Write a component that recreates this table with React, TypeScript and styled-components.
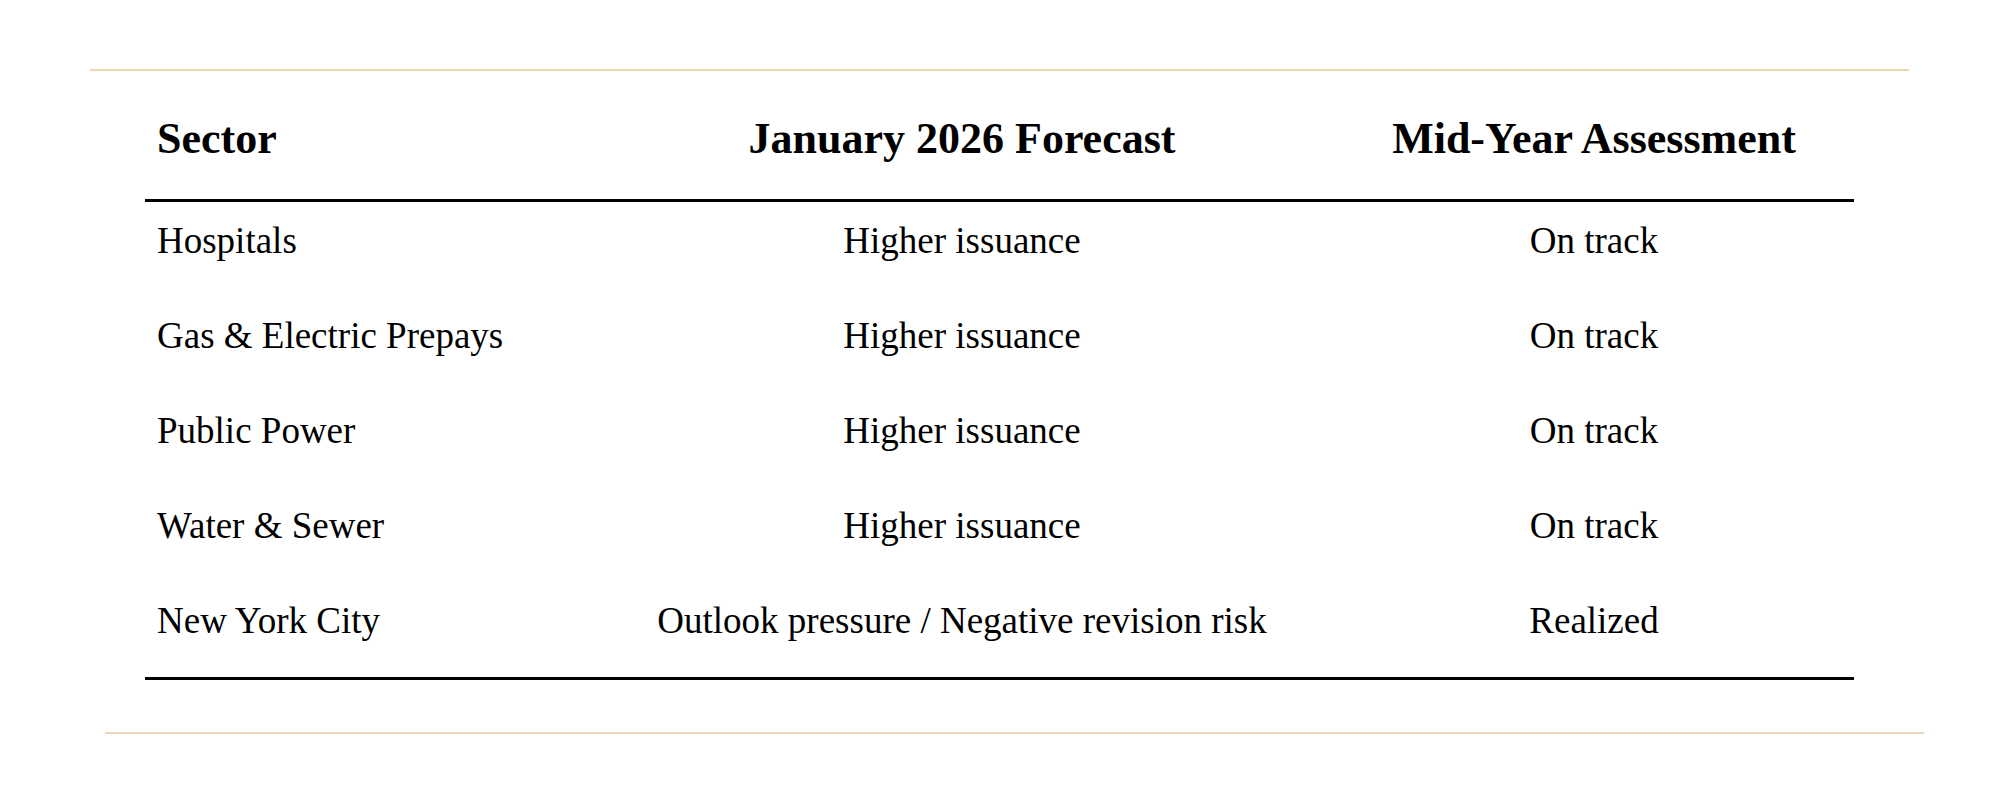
import React from 'react';
import styled, { createGlobalStyle } from 'styled-components';

const GlobalStyle = createGlobalStyle`
  html, body {
    margin: 0;
    padding: 0;
    background: #fff;
  }
  body {
    font-family: "Liberation Serif", "Times New Roman", serif;
    color: #000;
  }
`;

const Page = styled.main`
  width: 2000px;
  min-height: 804px;
  padding-top: 69px;
  box-sizing: border-box;
`;

interface RuleProps {
  offset: number;
  tone: string;
}
const Rule = styled.hr<RuleProps>`
  margin: 0 0 0 ${({ offset }) => offset}px;
  width: 1819px;
  height: 2px;
  border: none;
  background: ${({ tone }) => tone};
`;

const Table = styled.section`
  width: 1709px;
  margin: 0 0 52px 145px;
  border-bottom: 3px solid #000;
`;

const Row = styled.div`
  display: grid;
  grid-template-columns: 445px 744px 520px;
`;

const HeaderRow = styled(Row)`
  border-bottom: 3px solid #000;
`;

interface CellProps {
  align?: 'left' | 'center';
}
const HeadCell = styled.div<CellProps>`
  padding: 43px 12px 35px 12px;
  font-size: 44px;
  line-height: 50px;
  font-weight: 700;
  text-align: ${({ align = 'center' }) => align};
  white-space: nowrap;
`;

const Cell = styled.div<CellProps>`
  padding: 18px 12px 35px 12px;
  font-size: 37px;
  line-height: 42px;
  text-align: ${({ align = 'center' }) => align};
  white-space: nowrap;
`;

interface Entry {
  sector: string;
  forecast: string;
  assessment: string;
}

const entries: Entry[] = [
  { sector: 'Hospitals', forecast: 'Higher issuance', assessment: 'On track' },
  { sector: 'Gas & Electric Prepays', forecast: 'Higher issuance', assessment: 'On track' },
  { sector: 'Public Power', forecast: 'Higher issuance', assessment: 'On track' },
  { sector: 'Water & Sewer', forecast: 'Higher issuance', assessment: 'On track' },
  { sector: 'New York City', forecast: 'Outlook pressure / Negative revision risk', assessment: 'Realized' }
];

export default function App() {
  const rowEls = entries.map(({ sector, forecast, assessment }, i) => (
    <Row key={i}>
      <Cell align="left">{sector}</Cell>
      <Cell>{forecast}</Cell>
      <Cell>{assessment}</Cell>
    </Row>
  ));

  return (
    <Page>
      <GlobalStyle />
      <Rule offset={90} tone="#ead7b0" />
      <Table>
        <HeaderRow>
          <HeadCell align="left">Sector</HeadCell>
          <HeadCell>January 2026 Forecast</HeadCell>
          <HeadCell>Mid-Year Assessment</HeadCell>
        </HeaderRow>
        {rowEls}
      </Table>
      <Rule offset={105} tone="#e8d6bf" />
    </Page>
  );
}
